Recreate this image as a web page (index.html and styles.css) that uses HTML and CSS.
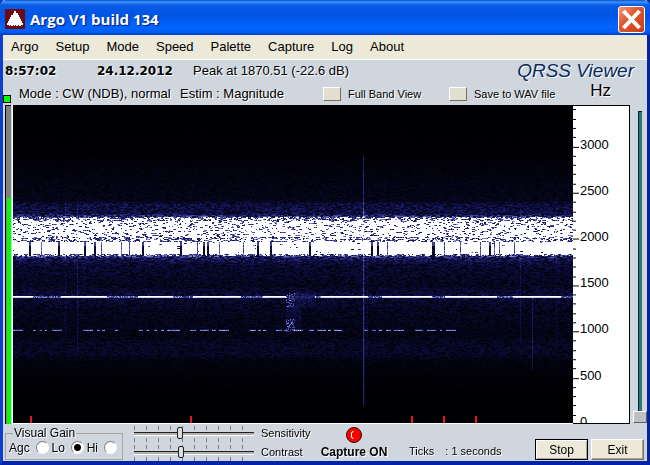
FILE: index.html
```html
<!DOCTYPE html>
<html lang="en">
<head>
<meta charset="utf-8">
<title>Argo V1 build 134</title>
<link rel="stylesheet" href="styles.css">
</head>
<body>
<div class="window">
  <header class="titlebar">
    <svg class="app-icon" viewBox="0 0 20 20" aria-hidden="true">
      <rect width="20" height="20" rx="1" fill="#6b0a10"/>
      <path d="M9 2h2v2h2v2h1v2h1v2h1v2h1v2h1v2h-2v1h-2v-1h-1v1h-2v-1h-1v1H9v-1H8v1H6v-1H5v1H4v-1H2v-2h1v-2h1v-2h1V8h1V6h2V4h1z" fill="#fff"/>
    </svg>
    <h1 class="title">Argo V1 build 134</h1>
    <button class="close" type="button" aria-label="Close">
      <svg viewBox="0 0 24 25" aria-hidden="true"><path d="M4 4l16 17M20 4L4 21" stroke="#fff" stroke-width="4"/></svg>
    </button>
  </header>
  <nav class="menu">
    <a href="#">Argo</a><a href="#">Setup</a><a href="#">Mode</a><a href="#">Speed</a><a href="#">Palette</a><a href="#">Capture</a><a href="#">Log</a><a href="#">About</a>
  </nav>
  <div class="status">
    <b class="time">8:57:02</b><b class="date">24.12.2012</b>
    <span class="peak">Peak at 1870.51 (-22.6 dB)</span>
    <span class="brand">QRSS Viewer</span>
  </div>
  <div class="options">
    <i class="led"></i>
    <span class="mode">Mode : CW (NDB), normal</span>
    <span class="estim">Estim : Magnitude</span>
    <label class="toggle full"><input type="checkbox">Full Band View</label>
    <label class="toggle"><input type="checkbox">Save to WAV file</label>
    <span class="unit">Hz</span>
  </div>
  <main class="display">
    <div class="meter"><div class="meter-bar"><div class="meter-fill"></div></div></div>
    <canvas class="waterfall" id="waterfall" width="560" height="318"></canvas>
    <svg class="scale" id="scale" viewBox="0 0 57 318" preserveAspectRatio="xMinYMin slice"></svg>
    <div class="level"><div class="level-track"></div><div class="level-thumb"></div></div>
  </main>
  <footer class="controls">
    <fieldset class="gain">
      <legend>Visual Gain</legend>
      <label>Agc<input type="radio" name="gain"></label>
      <label>Lo<input type="radio" name="gain" checked></label>
      <label>Hi<input type="radio" name="gain"></label>
    </fieldset>
    <div class="sliders">
      <label><input type="range" min="0" max="100" value="38">Sensitivity</label>
      <label><input type="range" min="0" max="100" value="39">Contrast</label>
    </div>
    <div class="capture">
      <svg viewBox="0 0 18 18" aria-hidden="true">
        <circle cx="9" cy="9" r="7.5" fill="#f00" stroke="#300" stroke-width="1"/>
        <path d="M8.500 5.500h-1v1h-1v5h1v1h1" fill="none" stroke="#fff" stroke-width="1"/>
      </svg>
      <b>Capture ON</b>
    </div>
    <div class="ticks"><span>Ticks</span><span>: 1 seconds</span></div>
    <div class="buttons">
      <button class="push default" type="button">Stop</button>
      <button class="push" type="button">Exit</button>
    </div>
  </footer>
</div>
<script src="waterfall.js"></script>
</body>
</html>
```
FILE: styles.css
```css
* { box-sizing: border-box; }
body {
  margin: 0;
  font: 13px/16px "Liberation Sans", sans-serif;
  color: #000;
  background: #cfd8e0;
}
.window {
  display: flex;
  flex-direction: column;
  height: 100vh;
  border: solid #0a3fd0;
  border-width: 0 3px 4px;
  border-bottom-color: #0424a8;
  border-right-color: #0424a8;
  background: #cfd6de;
}
.titlebar {
  display: flex;
  align-items: center;
  flex: none;
  height: 35px;
  margin: 0 -3px;
  padding: 3px 5px 0 5px;
  border-radius: 6px 6px 0 0;
  background: linear-gradient(#0a50c8 0, #3c94ff 2px, #0a5ae6 5px, #0055e5 16px, #0066ff 28px, #005cf5 32px, #003dc8 35px);
}
.app-icon { width: 20px; height: 20px; margin-right: 5px; }
.title {
  flex: 1;
  margin: 0;
  font: bold 15px/20px "Open Sans", "Noto Sans", sans-serif;
  color: #fff;
  text-shadow: 1px 1px 1px #0a1883;
}
.close {
  width: 27px;
  height: 27px;
  padding: 0;
  border: 1px solid #fff;
  border-radius: 3px;
  background: linear-gradient(135deg, #f0987c, #e05a30 40%, #c83c14);
}
.close svg { display: block; width: 25px; height: 25px; }
.menu {
  display: flex;
  flex: none;
  gap: 17px;
  height: 25px;
  padding: 4px 8px;
  border-bottom: 1px solid #fff;
  background: #ece9d8;
}
.menu a { color: #000; text-decoration: none; }
.status, .options { display: flex; flex: none; text-shadow: 1px 1px 0 #fff; }
.status { height: 22px; padding: 0 13px 0 2px; align-items: center; }
.status b { font: bold 12px/16px "Liberation Sans", sans-serif; font: bold 12px/16px "DejaVu Sans", sans-serif; }
.time { width: 92px; }
.date { width: 96px; }
.status .peak { flex: 1; }
.brand { font: italic 19px/20px "Liberation Sans", sans-serif; color: #0a2a60; }
.options { height: 23px; align-items: center; }
.led { align-self: end; width: 8px; height: 8px; margin: 0 8px 2px 0; border: 1px solid #000; background: #0f0; }
.mode { width: 161px; }
.estim { width: 143px; }
.toggle { display: flex; align-items: center; gap: 7px; font-size: 11px; }
.toggle.full { width: 126px; }
.toggle input {
  appearance: none;
  width: 18px;
  height: 14px;
  margin: 0;
  border: 1px solid;
  border-color: #fff #716f64 #716f64 #fff;
  background: #e4e0d0;
}
.unit { margin: 0 36px 6px auto; font-size: 17px; }
.display { display: flex; flex: 1; min-height: 0; }
.meter { flex: none; width: 10px; padding-left: 2px; border-right: 1px solid #fff; }
.meter-bar {
  display: flex;
  align-items: flex-end;
  width: 6px;
  height: 100%;
  border: solid #000;
  border-width: 1px 0 0 1px;
  background: #808080;
}
.meter-fill { width: 4px; height: 71%; margin-left: 1px; background: #0f0; }
.waterfall { flex: 1; min-width: 0; width: 100%; height: 100%; background: #000; border-bottom: 1px solid #fff; }
.scale { flex: none; width: 57px; height: 100%; border: solid #000; border-width: 1px 1px 1px 0; background: #fff; font-size: 13px; }
.level { display: flex; flex: none; flex-direction: column; align-items: center; width: 17px; padding: 6px 0 1px 3px; }
.level-track { flex: 1; width: 4px; border-top: 1px solid #000; border-left: 1px solid #123; background: #2a7a74; }
.level-thumb { width: 14px; height: 12px; border: 1px solid; border-color: #fff #606060 #606060 #fff; background: #c0c0c0; }
.controls { display: flex; flex: none; height: 37px; text-shadow: 1px 1px 0 #fff; font-size: 12px; }
.gain {
  display: flex;
  justify-content: space-between;
  width: 118px;
  height: 33px;
  margin: 3px 0 0 2px;
  padding: 0 5px 3px 3px;
  border: 1px solid #a8a594;
}
.gain legend { margin-left: 4px; padding: 0 1px; line-height: 12px; }
.gain label { display: flex; align-items: center; gap: 6px; }
.gain input {
  appearance: none;
  width: 13px;
  height: 13px;
  margin: 0;
  border: 1px solid;
  border-color: #808080 #fff #fff #808080;
  border-radius: 50%;
  background: #fff;
}
.gain input:checked { background: radial-gradient(circle, #000 3px, #fff 4px); }
.sliders { display: flex; flex-direction: column; margin-left: 11px; width: 187px; font-size: 11px; }
.sliders label { display: flex; align-items: center; gap: 7px; height: 19px; }
.sliders input {
  appearance: none;
  width: 120px;
  height: 18px;
  margin: 0;
  background:
    linear-gradient(#202020 1px, #b0b0b0 1px, #b0b0b0 3px, #fff 3px) 0 8px / 100% 4px no-repeat,
    repeating-linear-gradient(90deg, #808080 0 1px, transparent 1px 12px) 0 2px / 100% 4px no-repeat,
    repeating-linear-gradient(90deg, #808080 0 1px, transparent 1px 12px) 0 14px / 100% 4px no-repeat;
}
.sliders input::-webkit-slider-thumb {
  appearance: none;
  width: 6px;
  height: 12px;
  border: 1px solid #202020;
  border-radius: 2px;
  background: #dcdcdc;
}
.capture { display: flex; flex-direction: column; align-items: center; width: 66px; }
.capture svg { flex: none; width: 18px; height: 18px; margin-top: 2px; }
.capture b { white-space: nowrap; }
.ticks { display: flex; gap: 11px; margin: 19px 0 0 22px; font-size: 11px; white-space: nowrap; }
.buttons { display: flex; gap: 3px; margin: 15px 3px 0 auto; }
.push {
  width: 53px;
  height: 21px;
  padding: 0;
  border: 1px solid;
  border-color: #fff #716f64 #716f64 #fff;
  background: #ece9d8;
  box-shadow: inset -1px -1px 0 #aca899;
  font: 12px/16px "Liberation Sans", sans-serif;
}
.push.default { border-color: #000; box-shadow: inset 1px 1px 0 #fff, inset -1px -1px 0 #aca899; }
```
FILE: waterfall.js
```js
const canvas = document.getElementById('waterfall');
const ctx = canvas.getContext('2d');
const W = canvas.width, H = canvas.height;
const image = ctx.createImageData(W, H);

let seed = 20121224;
function rnd() {
  seed = (Math.imul(seed, 1664525) + 1013904223) >>> 0;
  return seed / 4294967296;
}

// Noise floor as [row, level] pairs
const floor = [[0, 0], [50, 0.01], [75, 0.05], [95, 0.07], [99, 0.19], [108, 0.2], [112, 0.45],
  [150, 0.5], [153, 0.26], [160, 0.14], [180, 0.09], [191, 0.18], [196, 0.13], [205, 0.09],
  [230, 0.06], [238, 0.1], [248, 0.11], [256, 0.04], [270, 0.02], [290, 0], [318, 0]];
function level(y) {
  let i = 1;
  while (floor[i][0] < y) i++;
  const [y0, a] = floor[i - 1], [y1, b] = floor[i];
  return a + (b - a) * (y - y0) / (y1 - y0 || 1);
}

// Palette: black, navy, blue, white
const stops = [[0, 0, 0, 2], [0.25, 16, 18, 82], [0.5, 58, 62, 150], [0.75, 150, 155, 220], [1, 255, 255, 255]];
function colour(v) {
  v = Math.max(0, Math.min(1, v));
  const i = Math.min(3, Math.floor(v * 4));
  const t = v * 4 - i;
  return [1, 2, 3].map(k => stops[i][k] + (stops[i + 1][k] - stops[i][k]) * t);
}

// Keyed gaps in the lower band: [column, width]
const gaps = [[16, 2], [28, 1], [45, 2], [71, 2], [81, 2], [88, 1], [108, 1], [116, 1], [129, 2], [167, 2],
  [184, 1], [190, 2], [194, 2], [206, 1], [230, 1], [244, 2], [257, 2], [296, 2], [358, 2], [364, 2],
  [374, 1], [419, 3], [431, 1], [447, 1], [467, 1], [476, 2], [481, 1], [486, 1], [501, 1]];
const streaks = [[52, 95, 235, 0.12], [64, 95, 250, 0.18], [71, 95, 190, 0.1], [350, 50, 300, 0.4], [351, 110, 300, 0.14],
  [354, 120, 250, 0.1], [507, 100, 240, 0.14], [519, 190, 265, 0.25], [543, 90, 240, 0.08]];
const fades = [[20, 48], [94, 125], [160, 180], [228, 250], [303, 308], [355, 369], [419, 432], [484, 500], [548, 560]];
const dashes = [[0, 10], [20, 23], [27, 29], [32, 34], [39, 49], [70, 80], [84, 87], [89, 92], [102, 105],
  [126, 130], [133, 136], [141, 144], [148, 151], [154, 167], [177, 183], [187, 196], [199, 203], [206, 216],
  [237, 243], [245, 248], [250, 253], [263, 269], [271, 275], [280, 290], [296, 301], [304, 313], [315, 318],
  [321, 329], [351, 355], [359, 363], [366, 369], [373, 378], [381, 391], [402, 410], [414, 423], [427, 429], [433, 443]];
const within = (list, x) => list.some(([a, b]) => x >= a && x < b);

for (let y = 0; y < H; y++) {
  const base = level(y);
  let run = 0, n = 0;
  for (let x = 0; x < W; x++) {
    if (run-- <= 0) { run = Math.floor(rnd() * 3); n = rnd(); }
    let v = base * (0.2 + n * 1.5);
    if (y >= 112 && y < 151) {
      const outer = y < 113 || y === 150;
      const edge = y < 116 || (y >= 132 && y < 137) || y >= 149;
      const dark = outer ? 0.7 : edge ? 0.42 : y < 137 ? 0.19 : 0.01;
      v = n < dark ? 0.15 + rnd() * 0.6 : 1;
      const gap = gaps.find(([g, w]) => x >= g && x < g + w);
      if (gap && y > 136) v = (gap[1] > 1 ? (y > 140 ? 0.12 : 0.5) : 0.35 + rnd() * 0.4);
    }
    for (const [sx, y0, y1, s] of streaks) {
      if (x === sx && y > y0 && y < y1) v += s * (0.6 + rnd() * 0.4);
    }
    if (y >= 191 && y <= 192) {
      if (x >= 274 && x < 302) v = 0.15 + rnd() * 0.25;
      else v = within(fades, x) ? 0.3 + rnd() * 0.5 : (y === 191 ? 1 : 0.88);
    }
    if (y === 225 && within(dashes, x)) v = 0.55 + rnd() * 0.25;
    if (y === 224 && within(dashes, x)) v += 0.2;
    if (x >= 273 && x < 282 && ((y > 187 && y < 202) || (y > 213 && y < 227)) && rnd() < 0.4) v = 0.3 + rnd() * 0.4;
    if (x >= 273 && x < 288 && y > 200 && y < 226) v += rnd() * 0.15;
    if (x >= 282 && x < 302 && y > 187 && y < 202) v += rnd() * 0.15;
    const p = (y * W + x) * 4;
    const c = colour(v);
    image.data[p] = c[0];
    image.data[p + 1] = c[1];
    image.data[p + 2] = c[2];
    image.data[p + 3] = 255;
  }
}
ctx.putImageData(image, 0, 0);
ctx.fillStyle = '#e01818';
for (const x of [17, 177, 398, 430, 462]) ctx.fillRect(x, H - 7, 2, 7);

// Frequency scale: a tick each 100 Hz, a label each 500 Hz
const scale = document.getElementById('scale');
const ns = 'http://www.w3.org/2000/svg';
for (let hz = 0; hz <= 3400; hz += 100) {
  const y = Math.round(319 - hz * 0.0928);
  const tick = document.createElementNS(ns, 'rect');
  tick.setAttribute('x', 0);
  tick.setAttribute('y', y);
  tick.setAttribute('width', hz % 500 ? 3 : 6);
  tick.setAttribute('height', 1);
  scale.append(tick);
  if (hz % 500 === 0) {
    const label = document.createElementNS(ns, 'text');
    label.setAttribute('x', 7);
    label.setAttribute('y', y + 2);
    label.textContent = hz;
    scale.append(label);
  }
}
```
